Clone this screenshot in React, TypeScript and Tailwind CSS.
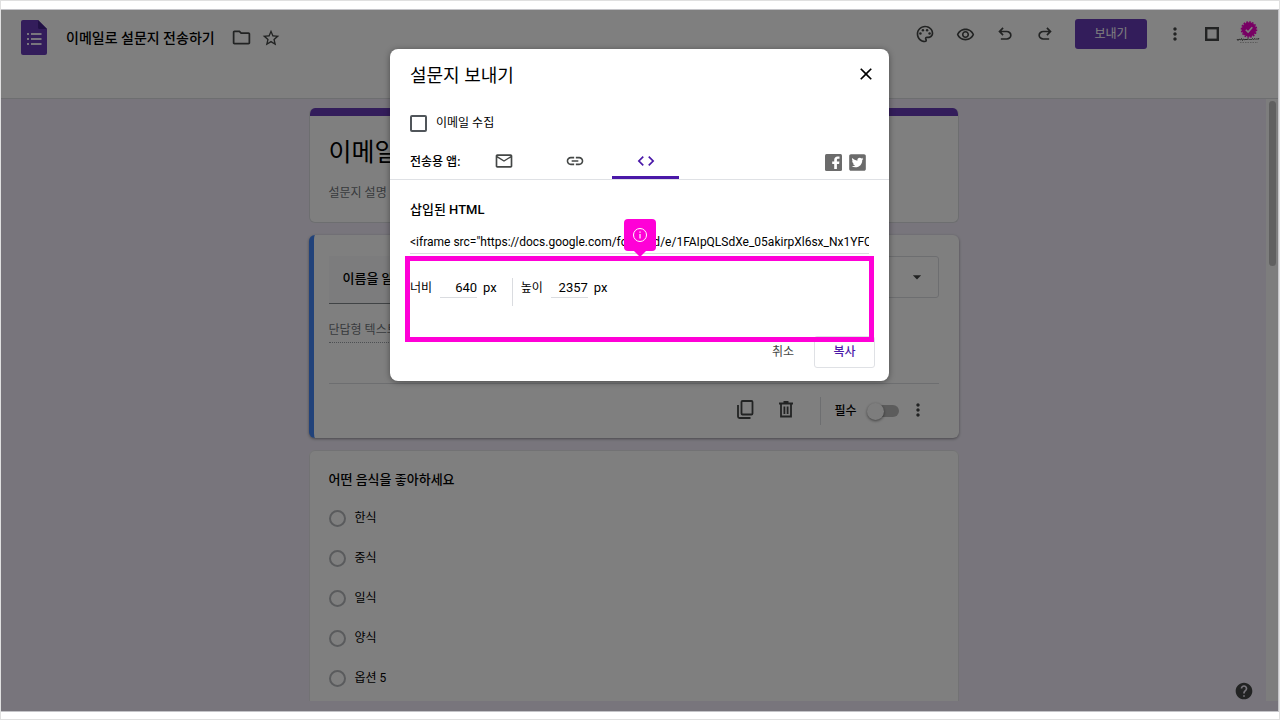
import { type ReactNode } from 'react';
import { FaTwitterSquare } from 'react-icons/fa';
import {
    MdArrowDropDown,
    MdClose,
    MdCode,
    MdHelp,
    MdLink,
    MdMoreVert,
    MdOutlineFolder,
    MdOutlineMail,
    MdOutlinePalette,
    MdOutlineRemoveRedEye,
    MdStarBorder,
} from 'react-icons/md';

const choices = ['한식', '중식', '일식', '양식', '옵션 5'];

const embedCode =
    '<iframe src="https://docs.google.com/forms/d/e/1FAIpQLSdXe_05akirpXl6sx_Nx1YFQ/viewform?embedded=true" width="640" height="2357"></iframe>';

function FormsLogo() {
    return (
        <svg width="26" height="35" viewBox="0 0 26 35" aria-hidden="true">
            <path d="M2 0H17l9 9v24a2 2 0 0 1-2 2H2a2 2 0 0 1-2-2V2A2 2 0 0 1 2 0z" fill="#673ab7" />
            <path d="M17 0l9 9h-7.500a1.500 1.500 0 0 1-1.500-1.500z" fill="#42238a" />
            <path d="M10 13h10.500v2H10zM10 18h10.500v2H10zM10 23h10.500v2H10z" fill="#f1ebfa" />
            <path d="M6 13h2v2H6zM6 18h2v2H6zM6 23h2v2H6z" fill="#f1ebfa" />
        </svg>
    );
}

function UndoIcon({ flip = false }: { flip?: boolean }) {
    return (
        <svg width="20" height="20" viewBox="0 -960 960 960" fill="currentColor" aria-hidden="true" className={flip ? '-scale-x-100' : ''}>
            <path d="M280-200v-80h284q63 0 109.500-40T720-420q0-60-46.500-100T564-560H312l104 104-56 56-200-200 200-200 56 56-104 104h252q97 0 169.500 63T800-420q0 94-72.500 157T564-200H280Z" />
        </svg>
    );
}

function AccountBadge() {
    return (
        <svg width="26" height="26" viewBox="0 0 26 26" aria-hidden="true">
            <circle cx="13" cy="8.500" r="7.200" fill="#f000c8" />
            <circle cx="13" cy="8.500" r="7.500" fill="none" stroke="#f000c8" strokeWidth="1.600" strokeDasharray="1.700 1.240" />
            <path d="M9.800 8.800l2.300 2.300 4.200-4.800" fill="none" stroke="#fff" strokeWidth="1.600" />
            <path d="M1 18l1 1.500 1-1.500 1.500 1 1-1.500 1 2 1-1.500 1.500 1 1-1 1 1 1-1.500 1.500 1.500 1-1 1 1 1-1.500 1 1 1.500-1 1 1 1-1 1 1 1-1.500" fill="none" stroke="#555" strokeWidth="1" />
            <path d="M4 21.500h18" stroke="#bbb" strokeWidth="1" strokeDasharray="1.500 1" />
        </svg>
    );
}

function SquareIcon() {
    return (
        <svg width="14" height="14" viewBox="0 0 14 14" fill="none" stroke="currentColor" strokeWidth="2.400" aria-hidden="true">
            <rect x="1.200" y="1.200" width="11.600" height="11.600" />
        </svg>
    );
}

function CopyIcon() {
    return (
        <svg width="17" height="19" viewBox="0 0 17 19" fill="none" stroke="currentColor" strokeWidth="1.800" aria-hidden="true">
            <rect x="4.500" y="1" width="11" height="13.500" rx="1" />
            <path d="M1 5v11.500a1.500 1.500 0 0 0 1.500 1.500H13.500" />
        </svg>
    );
}

function TrashIcon() {
    return (
        <svg width="14" height="17" viewBox="0 0 14 17" fill="none" stroke="currentColor" strokeWidth="1.800" aria-hidden="true">
            <path d="M0 2.500h14M4.500 1h5M2 2.500v13h10v-13M5.400 5.500v7.500M8.600 5.500v7.500" />
        </svg>
    );
}

function FacebookIcon() {
    return (
        <svg width="17" height="17" viewBox="0 0 17 17" aria-hidden="true">
            <rect width="17" height="17" rx="1.500" fill="#6b6b6b" />
            <path d="M9.200 15v-5H7.200V7.500h2V5.900C9.200 3.700 10.500 2.400 12.600 2.400h1.900v2.300h-1.300c-.9 0-1.300.4-1.300 1.300v1.500h2.500l-.3 2.500h-2.200v5z" fill="#fff" />
        </svg>
    );
}

function IconButton({ label, children }: { label: string; children: ReactNode }) {
    return (
        <button type="button" aria-label={label} className="flex w-10 shrink-0 items-center justify-center text-[#444746]">
            {children}
        </button>
    );
}

function Header() {
    return (
        <header className="flex h-[89px] shrink-0 items-start justify-between border-b border-[#dadce0] bg-white pt-[9px] pr-4 pl-5">
            <div className="flex h-[37px] items-center text-[#444746]">
                <FormsLogo />
                <h1 className="ml-[19px] text-[14px] leading-5 font-medium text-black">이메일로 설문지 전송하기</h1>
                <button type="button" aria-label="폴더로 이동" className="ml-4">
                    <MdOutlineFolder size={21} />
                </button>
                <button type="button" aria-label="별표" className="ml-[9px]">
                    <MdStarBorder size={20} />
                </button>
            </div>
            <div className="flex h-[30px] items-center">
                <IconButton label="테마 맞춤설정">
                    <MdOutlinePalette size={20} />
                </IconButton>
                <IconButton label="미리보기">
                    <MdOutlineRemoveRedEye size={19} />
                </IconButton>
                <IconButton label="실행취소">
                    <UndoIcon />
                </IconButton>
                <IconButton label="다시 실행">
                    <UndoIcon flip />
                </IconButton>
                <button type="button" className="mr-2 ml-[10px] h-[30px] w-18 rounded-[3px] bg-[#673ab7] text-[12px] text-white">
                    보내기
                </button>
                <IconButton label="더보기">
                    <MdMoreVert size={20} />
                </IconButton>
                <button type="button" aria-label="Google 앱" className="ml-[10px] text-[#444746]">
                    <SquareIcon />
                </button>
                <button type="button" aria-label="계정" className="ml-[17px]">
                    <AccountBadge />
                </button>
            </div>
        </header>
    );
}

function TitleCard() {
    return (
        <section className="h-[115px] shrink-0 overflow-hidden rounded-[6px] border border-t-0 border-[#dadce0] bg-white">
            <div className="h-2 bg-[#673ab7]" />
            <div className="px-[19px] pt-[21px]">
                <h2 className="text-[25px] leading-8 text-black">이메일로 설문지 전송하기</h2>
                <p className="mt-[14px] text-[12px] leading-5 text-[#70757a]">설문지 설명</p>
            </div>
        </section>
    );
}

function ActiveQuestion() {
    return (
        <section className="flex shrink-0 flex-col overflow-hidden rounded-[6px] border-l-[5px] border-[#4285f4] bg-white pt-[21px] pr-5 pl-[15px] shadow-[0_1px_3px_rgba(0,0,0,0.4)]">
            <div className="flex items-start justify-between">
                <input
                    aria-label="질문"
                    defaultValue="이름을 알려주세요"
                    className="h-12 w-[320px] border-b border-[#80868b] bg-[#f8f9fa] px-[14px] pb-1 text-[13px] font-medium text-black"
                />
                <div className="relative">
                    <select
                        aria-label="질문 유형"
                        className="h-[42px] w-[200px] appearance-none rounded-[3px] border border-[#dadce0] px-4 text-[12px] text-black"
                    >
                        <option>단답형</option>
                    </select>
                    <MdArrowDropDown size={20} className="pointer-events-none absolute top-[11px] right-3 text-[#444746]" />
                </div>
            </div>
            <p className="mt-4 w-[300px] border-b border-dotted border-[#9aa0a6] pb-[2px] text-[12px] leading-5 text-[#70757a]">단답형 텍스트</p>
            <div className="mt-10 flex h-[55px] items-center justify-end border-t border-[#dadce0] text-[#444746]">
                <button type="button" aria-label="복사" className="pb-[3px]">
                    <CopyIcon />
                </button>
                <button type="button" aria-label="삭제" className="ml-[25px] pb-[3px]">
                    <TrashIcon />
                </button>
                <span className="ml-[27px] h-7 w-px bg-[#dadce0]" />
                <label htmlFor="required" className="ml-[13px] text-[12px] leading-5 font-medium text-black">
                    필수
                </label>
                <span className="relative ml-[10px] flex h-[18px] w-8 items-center">
                    <span className="ml-1 h-3 w-7 rounded-full bg-[#b9b9b9]" />
                    <input
                        id="required"
                        type="checkbox"
                        role="switch"
                        className="absolute left-0 size-[17px] appearance-none rounded-full bg-[#fafafa] shadow-[0_1px_3px_rgba(0,0,0,0.5)]"
                    />
                </span>
                <button type="button" aria-label="옵션 더보기" className="mr-[11px] ml-[9px] pb-[3px]">
                    <MdMoreVert size={20} />
                </button>
            </div>
        </section>
    );
}

function ChoiceQuestion() {
    return (
        <fieldset className="shrink-0 rounded-[6px] border border-[#e4e4e8] bg-white px-[19px] pt-[19px] pb-6">
            <h3 className="text-[13px] leading-5 font-medium text-black">어떤 음식을 좋아하세요</h3>
            <div className="mt-[18px] flex flex-col gap-[20px]">
                {choices.map((choice) => (
                    <label key={choice} className="flex items-center gap-[9px] text-[12px] leading-5 text-black">
                        <input type="radio" name="food" className="size-[17px] appearance-none rounded-full border-2 border-[#b4b7bb]" />
                        {choice}
                    </label>
                ))}
            </div>
        </fieldset>
    );
}

function SizeField({ id, label, value }: { id: string; label: string; value: string }) {
    return (
        <div className="flex items-center text-[12px] leading-4 text-black">
            <label htmlFor={id}>{label}</label>
            <input id={id} defaultValue={value} className="mr-[6px] ml-2 h-5 w-[37px] border-b border-[#dadce0] text-right text-[13px]" />
            <span className="text-[13px]">px</span>
        </div>
    );
}

function SendDialog() {
    return (
        <div role="dialog" aria-label="설문지 보내기" className="relative h-fit w-[499px] rounded-[8px] bg-white shadow-[0_1px_6px_rgba(0,0,0,0.4)]">
            <div className="flex items-center justify-between pt-[11px] pr-[13px] pl-5">
                <h2 className="text-[18px] leading-8 text-black">설문지 보내기</h2>
                <button type="button" aria-label="닫기" className="pb-1 text-black">
                    <MdClose size={20} />
                </button>
            </div>

            <label className="mt-[21px] ml-5 flex w-fit items-center gap-[9px] text-[12px] leading-5 text-black">
                <input type="checkbox" className="size-[17px] appearance-none rounded-[2px] border-2 border-[#50555a]" />
                이메일 수집
            </label>

            <div className="mt-2 flex h-[39px] items-stretch border-b border-[#dfe1e5] pr-[22px] pl-5 text-[#444746]">
                <span className="w-[60px] pt-[11px] text-[12px] leading-5 font-medium text-black">전송용 앱:</span>
                <div role="tablist" className="flex gap-1">
                    <button type="button" role="tab" aria-label="이메일" className="flex w-[67px] items-center justify-center pt-[2px]">
                        <MdOutlineMail size={20} />
                    </button>
                    <button type="button" role="tab" aria-label="링크" className="flex w-[67px] items-center justify-center pt-[2px]">
                        <MdLink size={20} />
                    </button>
                    <button
                        type="button"
                        role="tab"
                        aria-label="HTML 삽입"
                        aria-selected="true"
                        className="flex w-[67px] items-center justify-center border-b-3 border-[#4a18a8] pt-[5px] text-[#4a18a8]"
                    >
                        <MdCode size={20} />
                    </button>
                </div>
                <div className="ml-auto flex items-center gap-[6px] pt-[5px]">
                    <button type="button" aria-label="Facebook에 공유">
                        <FacebookIcon />
                    </button>
                    <button type="button" aria-label="Twitter에 공유" className="text-[#6b6b6b]">
                        <FaTwitterSquare size={19} />
                    </button>
                </div>
            </div>

            <div className="px-5 pt-5">
                <label htmlFor="embed" className="block text-[13px] leading-5 font-medium text-black">
                    삽입된 HTML
                </label>
                <input
                    id="embed"
                    readOnly
                    value={embedCode}
                    className="mt-[10px] h-6 w-full border-b border-[#dadce0] text-[12px] text-black"
                />
            </div>

            <div className="mt-6 flex h-7 items-start px-5">
                <SizeField id="width" label="너비" value="640" />
                <span className="mr-2 ml-[15px] h-7 w-px bg-[#dadce0]" />
                <SizeField id="height" label="높이" value="2357" />
            </div>

            <div className="mt-[30px] flex justify-end pr-[14px] pb-[13px] text-[12px]">
                <button type="button" className="h-8 w-[62px] text-[#444746]">
                    취소
                </button>
                <button type="button" className="h-8 w-[61px] rounded-[3px] border border-[#dfe1e5] font-medium text-[#4a18a8]">
                    복사
                </button>
            </div>

            {/* Callout over the size fields */}
            <div className="pointer-events-none absolute inset-x-[15px] top-[207px] h-[86px] border-5 border-[#ff00d7]">
                <div className="absolute -top-[42px] left-1/2 flex size-8 -translate-x-1/2 items-center justify-center rounded-[4px] bg-[#ff00d7]">
                    <svg width="16" height="16" viewBox="0 0 16 16" fill="none" stroke="#fff" aria-hidden="true">
                        <circle cx="8" cy="8" r="6.500" />
                        <path d="M8 7v4.500M8 4.500v1.300" strokeWidth="1.200" />
                    </svg>
                    <svg width="12" height="6" viewBox="0 0 12 6" fill="#ff00d7" className="absolute top-full left-[10px]" aria-hidden="true">
                        <path d="M0 0h12L6 6z" />
                    </svg>
                </div>
            </div>
        </div>
    );
}

export default function App() {
    return (
        <div className="flex h-screen flex-col border border-[#e0e0e0] bg-white pt-2 pb-[7px] font-['Roboto','Noto_Sans_CJK_KR',sans-serif]">
            <div className="relative flex min-h-0 flex-1 flex-col overflow-hidden border border-l-0 border-[#c4c4c8] bg-[#f0ebf8] pb-[10px]">
                <Header />

                <div className="flex min-h-0 flex-1">
                    <main className="min-w-0 flex-1 overflow-hidden">
                        <div className="mx-auto flex h-full w-[650px] flex-col gap-3 pt-[9px]">
                            <TitleCard />
                            <ActiveQuestion />
                            <ChoiceQuestion />
                        </div>
                    </main>
                    <div className="flex w-3 justify-center bg-[#fafafa] pt-[2px]">
                        <div className="h-[165px] w-[7px] rounded-full bg-[#c1c1c1]" />
                    </div>
                </div>

                <button type="button" aria-label="도움말" className="absolute right-6 bottom-[10px] text-[#444746]">
                    <MdHelp size={20} />
                </button>

                <div className="absolute inset-0 flex items-start justify-center bg-black/50 pt-[39px]">
                    <SendDialog />
                </div>
            </div>
        </div>
    );
}
